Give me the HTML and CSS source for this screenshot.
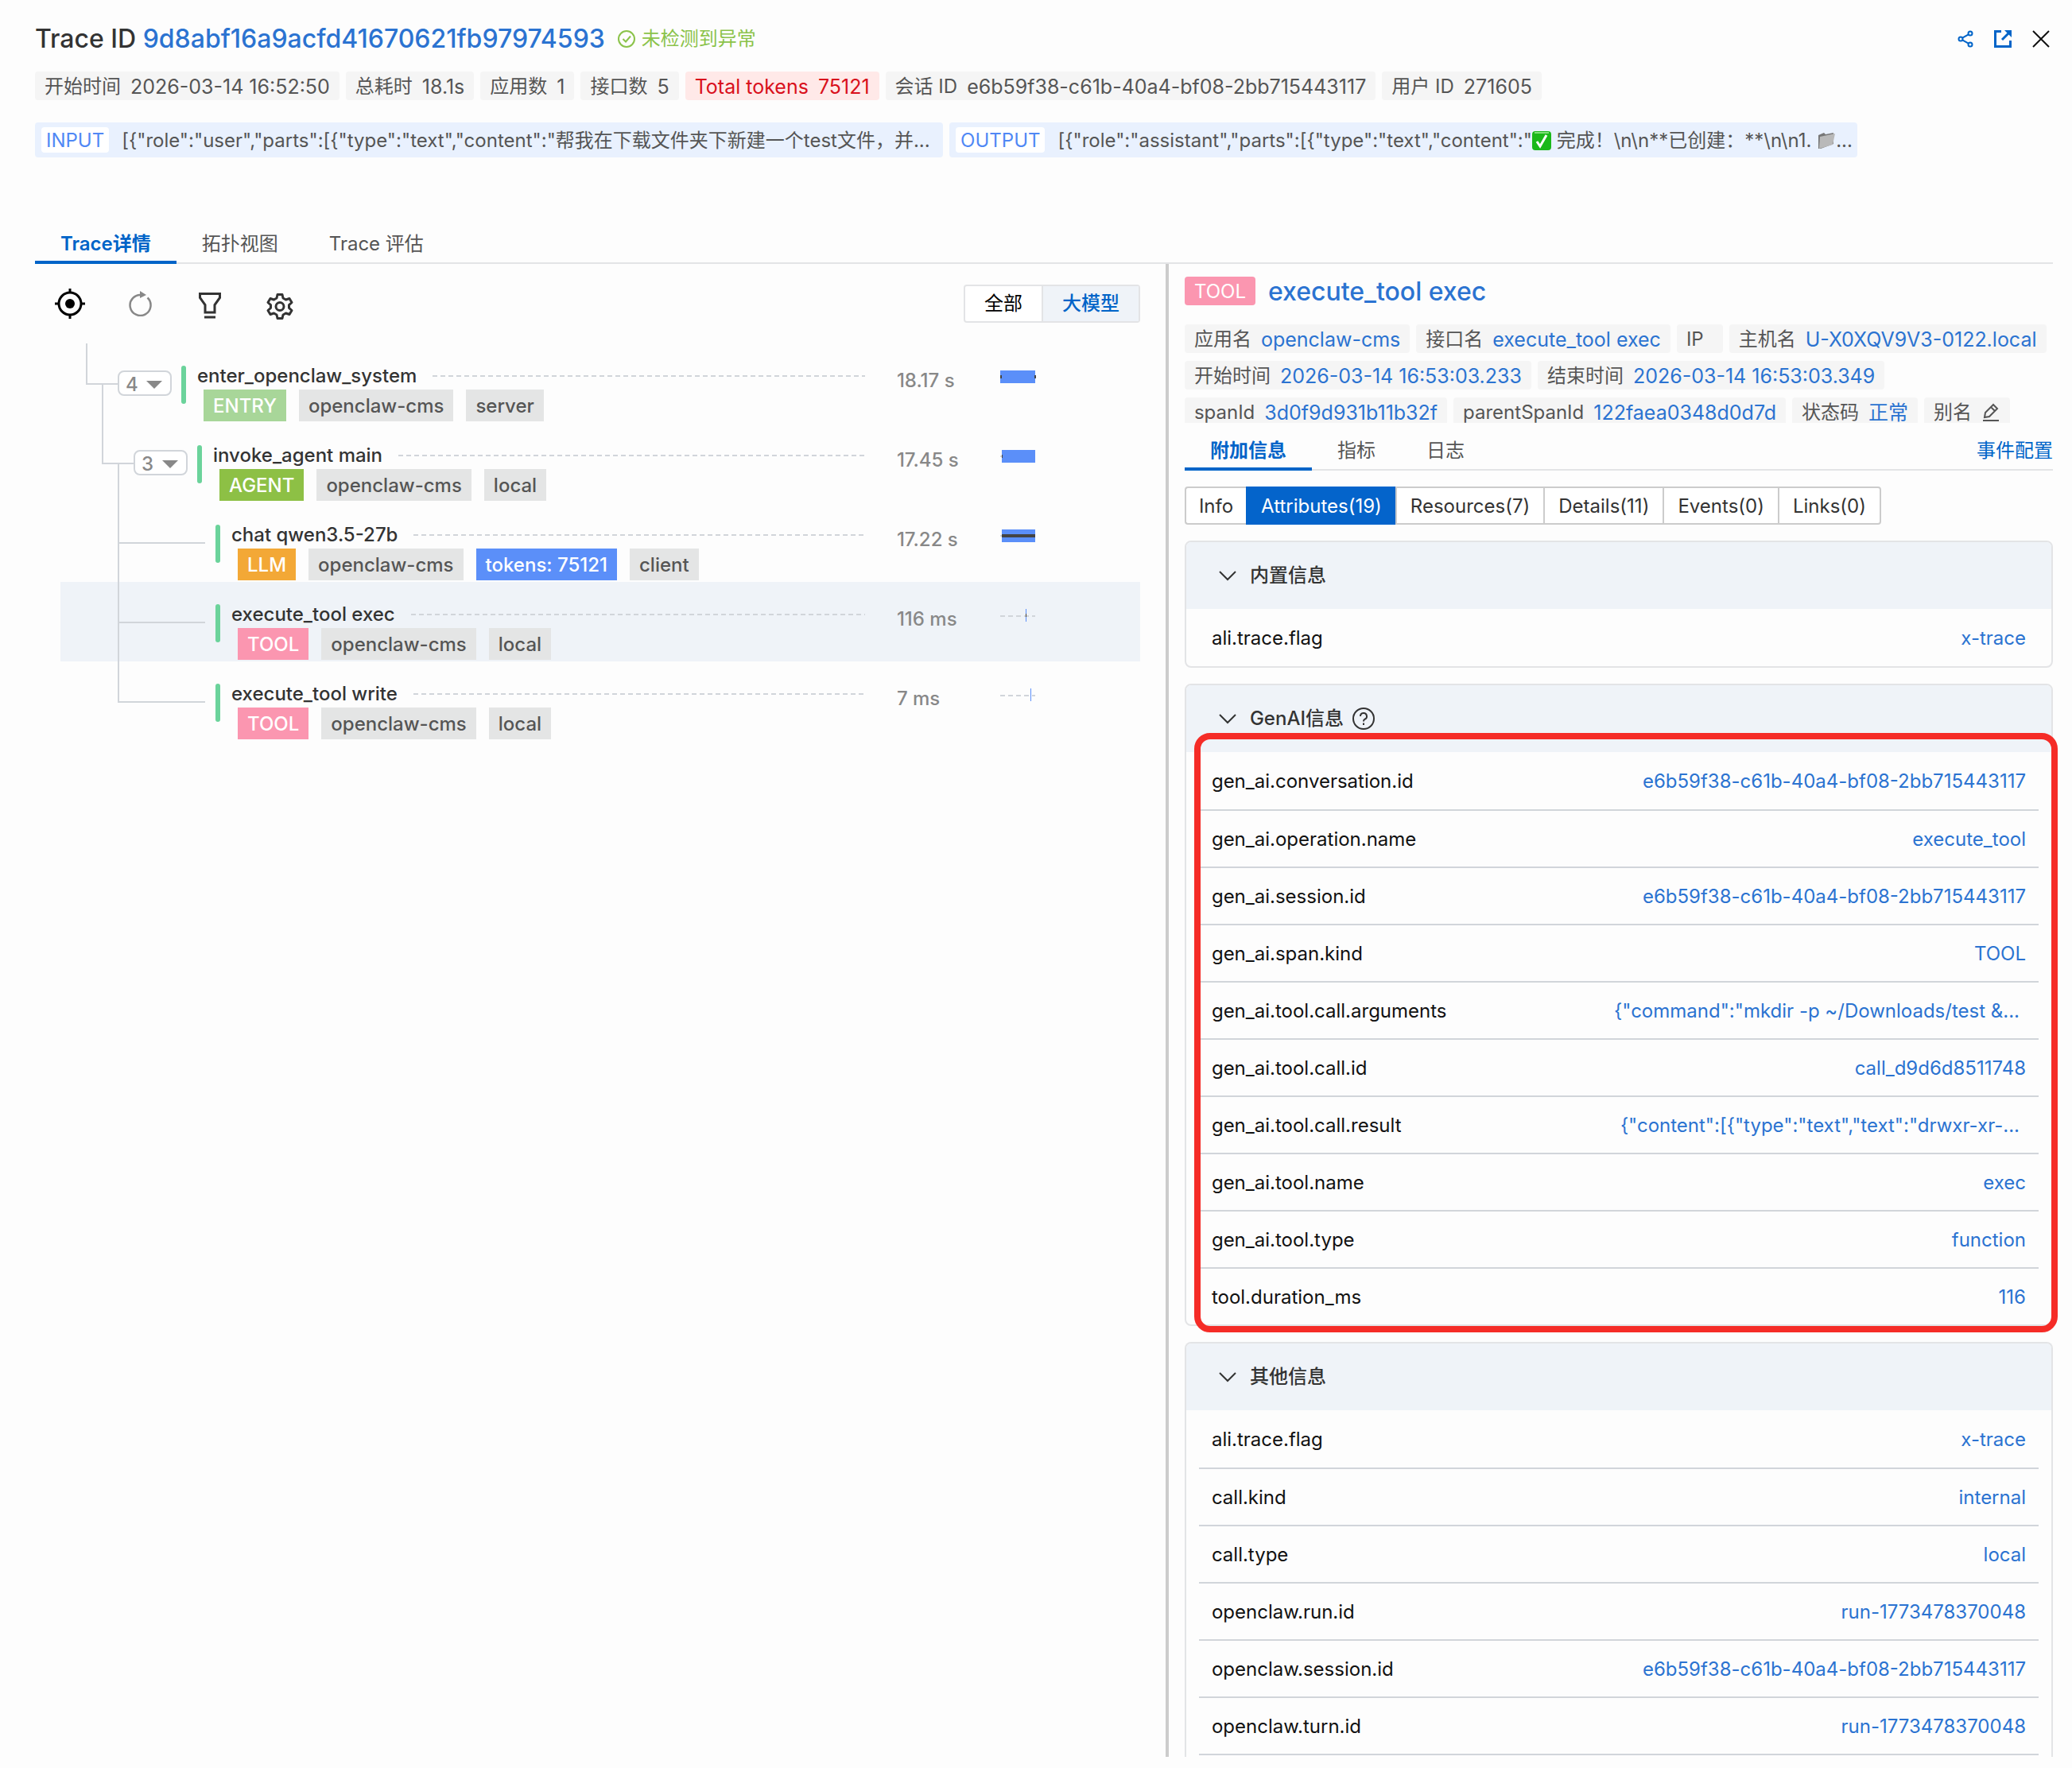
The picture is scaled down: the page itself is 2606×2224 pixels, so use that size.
FILE: index.html
```html
<!DOCTYPE html>
<html lang="zh-CN">
<head>
    <meta charset="UTF-8">
    <meta name="viewport" content="width=device-width, initial-scale=1.0">
    <title>Trace详情</title>
    <link rel="stylesheet" href="styles.css">
</head>
<body>

    <header class="trace-header">
        <div class="title-row">
            <h1>Trace ID <span class="trace-id">9d8abf16a9acfd41670621fb97974593</span></h1>
            <span class="status-ok">
                <svg width="22" height="22" viewBox="0 0 22 22" fill="none" stroke="currentColor" stroke-width="2"><circle cx="11" cy="11" r="10"/><path d="M6.5 11l3.5 3.5 6-7"/></svg>
                未检测到异常
            </span>
            <div class="window-actions">
                <button type="button" aria-label="分享">
                    <svg width="20" height="22" viewBox="0 0 20 22" fill="none" stroke="currentColor" stroke-width="2"><circle cx="4" cy="11" r="2.5"/><circle cx="16" cy="4" r="2.5"/><circle cx="16" cy="18" r="2.5"/><path d="M6.2 9.7L13.8 5.3M6.2 12.3l7.6 4.4"/></svg>
                </button>
                <button type="button" aria-label="新窗口打开">
                    <svg width="22" height="22" viewBox="0 0 22 22" fill="none" stroke="currentColor" stroke-width="3"><path d="M9 1.5H1.5v19h19V13"/><path d="M10 12l8-8"/><path d="M13 0h9v9z" fill="currentColor" stroke="none"/></svg>
                </button>
                <button type="button" class="close" aria-label="关闭">
                    <svg width="22" height="22" viewBox="0 0 22 22" fill="none" stroke="currentColor" stroke-width="2"><path d="M1 1l20 20M21 1L1 21"/></svg>
                </button>
            </div>
        </div>

        <div class="tags">
            <span class="tag"><span>开始时间</span><span class="val">2026-03-14 16:52:50</span></span>
            <span class="tag"><span>总耗时</span><span class="val">18.1s</span></span>
            <span class="tag"><span>应用数</span><span class="val">1</span></span>
            <span class="tag"><span>接口数</span><span class="val">5</span></span>
            <span class="tag tag-red"><span class="val">Total tokens</span><span class="val">75121</span></span>
            <span class="tag"><span>会话 ID</span><span class="val">e6b59f38-c61b-40a4-bf08-2bb715443117</span></span>
            <span class="tag"><span>用户 ID</span><span class="val">271605</span></span>
        </div>

        <div class="io-row">
            <div class="io">
                <span class="io-label">INPUT</span>
                <span class="io-text">[{"role":"user","parts":[{"type":"text","content":"帮我在下载文件夹下新建一个test文件，并...</span>
            </div>
            <div class="io">
                <span class="io-label">OUTPUT</span>
                <span class="io-text">[{"role":"assistant","parts":[{"type":"text","content":"<svg class="emoji" width="24" height="24" viewBox="0 0 24 24"><rect width="24" height="24" rx="4" fill="#1ab81a"/><path d="M3 2h18" stroke="#7fe07a" stroke-width="2"/><path d="M6 13l4 6 8-14" fill="none" stroke="#fff" stroke-width="3"/></svg> 完成！\n\n**已创建：**\n\n1. <svg class="emoji" width="24" height="24" viewBox="0 0 24 24"><path d="M2 5l7-3 2 2 10-2v14L5 22H2z" fill="#777"/><path d="M4 7l19-4-3 14L3 22z" fill="#b9b9b9"/></svg>...</span>
            </div>
        </div>
    </header>

    <nav class="tabs main-tabs">
        <button type="button" class="tab active">Trace详情</button>
        <button type="button" class="tab">拓扑视图</button>
        <button type="button" class="tab">Trace 评估</button>
    </nav>

    <main class="content">
        <section class="tree-panel">
            <div class="toolbar">
                <button type="button" class="tool-btn black" aria-label="定位">
                    <svg width="40" height="40" viewBox="0 0 40 40" fill="none" stroke="currentColor" stroke-width="3"><circle cx="20" cy="20" r="14"/><circle cx="20" cy="20" r="6" fill="currentColor" stroke="none"/><path d="M20 1v6M20 33v6M1 20h6M33 20h6"/></svg>
                </button>
                <button type="button" class="tool-btn grey" aria-label="刷新">
                    <svg width="32" height="32" viewBox="0 0 32 32" fill="none" stroke="currentColor" stroke-width="2.5"><path d="M25.500 8.500A13 13 0 1 1 18 5"/><path d="M16 0l8 5-8 4z" fill="currentColor" stroke="none"/></svg>
                </button>
                <button type="button" class="tool-btn" aria-label="筛选">
                    <svg width="32" height="40" viewBox="0 -4 32 40" fill="none" stroke="currentColor" stroke-width="3"><path d="M3.500 3.500h25v5l-6.500 9v9.500H10V17.500l-6.500-9z"/><path d="M9 33h14"/></svg>
                </button>
                <button type="button" class="tool-btn" aria-label="设置">
                    <svg width="34" height="40" viewBox="0 -6 34 40" fill="none" stroke="currentColor" stroke-width="3" stroke-linejoin="round"><path d="M14 2.500h6l1 4.500 3.500 2 4.500-1.500 3 5-3.500 3.200v3.600l3.500 3.200-3 5-4.500-1.500-3.500 2-1 4.500h-6l-1-4.500-3.500-2L5 27.500l-3-5 3.500-3.200v-3.600L2 12.500l3-5L9.500 9 13 7z"/><circle cx="17" cy="17.500" r="5"/></svg>
                </button>
                <div class="switch">
                    <button type="button">全部</button>
                    <button type="button" class="on">大模型</button>
                </div>
            </div>

            <div class="tree">
                <div class="node">
                    <svg class="guide" width="72" height="100"><path d="M33 0V51H72M53 51V100"/></svg>
                    <button type="button" class="fold">4<i></i></button>
                    <span class="mark"></span>
                    <div class="info">
                        <div class="name">enter_openclaw_system<span class="dash"></span></div>
                        <div class="labels"><span class="label entry">ENTRY</span><span class="label">openclaw-cms</span><span class="label">server</span></div>
                    </div>
                    <span class="cost">18.17 s</span>
                    <svg class="bar" width="176" height="16"><path d="M0 8h44" class="base"/><rect width="44" height="16" class="fill"/><path d="M0 8h2M43 8h2" class="self"/></svg>
                </div>
                <div class="node">
                    <svg class="guide" width="92" height="100"><path d="M53 0V51H92M73 51V100"/></svg>
                    <button type="button" class="fold">3<i></i></button>
                    <span class="mark"></span>
                    <div class="info">
                        <div class="name">invoke_agent main<span class="dash"></span></div>
                        <div class="labels"><span class="label agent">AGENT</span><span class="label">openclaw-cms</span><span class="label">local</span></div>
                    </div>
                    <span class="cost">17.45 s</span>
                    <svg class="bar" width="176" height="16"><path d="M0 8h44" class="base"/><rect x="2" width="42" height="16" class="fill"/><path d="M2 8h1" class="self"/></svg>
                </div>
                <div class="node">
                    <svg class="guide" width="183" height="100"><path d="M73 0V100M73 51H182"/></svg>
                    <span class="mark"></span>
                    <div class="info">
                        <div class="name">chat qwen3.5-27b<span class="dash"></span></div>
                        <div class="labels"><span class="label llm">LLM</span><span class="label">openclaw-cms</span><span class="label tokens">tokens: 75121</span><span class="label">client</span></div>
                    </div>
                    <span class="cost">17.22 s</span>
                    <svg class="bar" width="176" height="16"><path d="M0 8h44" class="base"/><rect x="2" width="42" height="16" class="fill"/><path d="M2 8h42" class="self"/></svg>
                </div>
                <div class="node selected">
                    <svg class="guide" width="183" height="100"><path d="M73 0V100M73 51H182"/></svg>
                    <span class="mark"></span>
                    <div class="info">
                        <div class="name">execute_tool exec<span class="dash"></span></div>
                        <div class="labels"><span class="label tool">TOOL</span><span class="label">openclaw-cms</span><span class="label">local</span></div>
                    </div>
                    <span class="cost">116 ms</span>
                    <svg class="bar" width="176" height="16"><path d="M0 9h44" class="base"/><rect x="32" width="1" height="16" class="fill"/><path d="M32 8h1" class="self"/></svg>
                </div>
                <div class="node">
                    <svg class="guide" width="183" height="100"><path d="M73 0V51H182"/></svg>
                    <span class="mark"></span>
                    <div class="info">
                        <div class="name">execute_tool write<span class="dash"></span></div>
                        <div class="labels"><span class="label tool">TOOL</span><span class="label">openclaw-cms</span><span class="label">local</span></div>
                    </div>
                    <span class="cost">7 ms</span>
                    <svg class="bar" width="176" height="16"><path d="M0 9h44" class="base"/><rect x="38" width="1" height="16" class="fill"/></svg>
                </div>
            </div>
        </section>

        <section class="detail-panel">
            <div class="span-title">
                <span class="badge">TOOL</span>
                <h2>execute_tool exec</h2>
            </div>

            <div class="tags span-tags">
                <span class="tag"><span>应用名</span><span class="val">openclaw-cms</span></span>
                <span class="tag"><span>接口名</span><span class="val">execute_tool exec</span></span>
                <span class="tag"><span>IP</span><span class="val"></span></span>
                <span class="tag"><span>主机名</span><span class="val">U-X0XQV9V3-0122.local</span></span>
                <span class="tag"><span>开始时间</span><span class="val">2026-03-14 16:53:03.233</span></span>
                <span class="tag"><span>结束时间</span><span class="val">2026-03-14 16:53:03.349</span></span>
                <span class="tag"><span>spanId</span><span class="val">3d0f9d931b11b32f</span></span>
                <span class="tag"><span>parentSpanId</span><span class="val">122faea0348d0d7d</span></span>
                <span class="tag"><span>状态码</span><span class="val">正常</span></span>
                <span class="tag"><span>别名</span><svg class="edit" width="24" height="24" viewBox="0 0 24 24" fill="none" stroke="currentColor" stroke-width="2"><path d="M4 19l1-6L15 3l5 5L10 18zM12 6l5 5M2 23h20"/></svg></span>
            </div>

            <nav class="tabs detail-tabs">
                <button type="button" class="tab active">附加信息</button>
                <button type="button" class="tab">指标</button>
                <button type="button" class="tab">日志</button>
                <a href="#" class="event-link">事件配置</a>
            </nav>

            <div class="segments">
                <button type="button">Info</button>
                <button type="button" class="on">Attributes(19)</button>
                <button type="button">Resources(7)</button>
                <button type="button">Details(11)</button>
                <button type="button">Events(0)</button>
                <button type="button">Links(0)</button>
            </div>

            <div class="card">
                <h3><svg width="24" height="14" viewBox="0 0 24 14"><path d="M2 2l10 10L22 2"/></svg>内置信息</h3>
                <div class="card-body">
                    <table>
                        <tr><th>ali.trace.flag</th><td>x-trace</td></tr>
                    </table>
                </div>
            </div>

            <div class="card">
                <h3><svg width="24" height="14" viewBox="0 0 24 14"><path d="M2 2l10 10L22 2"/></svg>GenAI信息<svg class="help" width="30" height="30" viewBox="0 0 30 30"><circle cx="15" cy="15" r="13"/><path d="M11 12a4 4 0 1 1 5.500 3.700Q15 16.500 15 18.500M15 20.500v2.500"/></svg></h3>
                <div class="card-body">
                    <table>
                        <tr><th>gen_ai.conversation.id</th><td>e6b59f38-c61b-40a4-bf08-2bb715443117</td></tr>
                        <tr><th>gen_ai.operation.name</th><td>execute_tool</td></tr>
                        <tr><th>gen_ai.session.id</th><td>e6b59f38-c61b-40a4-bf08-2bb715443117</td></tr>
                        <tr><th>gen_ai.span.kind</th><td>TOOL</td></tr>
                        <tr><th>gen_ai.tool.call.arguments</th><td class="cut">{"command":"mkdir -p ~/Downloads/test &amp;...</td></tr>
                        <tr><th>gen_ai.tool.call.id</th><td>call_d9d6d8511748</td></tr>
                        <tr><th>gen_ai.tool.call.result</th><td class="cut">{"content":[{"type":"text","text":"drwxr-xr-...</td></tr>
                        <tr><th>gen_ai.tool.name</th><td>exec</td></tr>
                        <tr><th>gen_ai.tool.type</th><td>function</td></tr>
                        <tr><th>tool.duration_ms</th><td>116</td></tr>
                    </table>
                </div>
                <div class="red-box"></div>
            </div>

            <div class="card more">
                <h3><svg width="24" height="14" viewBox="0 0 24 14"><path d="M2 2l10 10L22 2"/></svg>其他信息</h3>
                <div class="card-body">
                    <table>
                        <tr><th>ali.trace.flag</th><td>x-trace</td></tr>
                        <tr><th>call.kind</th><td>internal</td></tr>
                        <tr><th>call.type</th><td>local</td></tr>
                        <tr><th>openclaw.run.id</th><td>run-1773478370048</td></tr>
                        <tr><th>openclaw.session.id</th><td>e6b59f38-c61b-40a4-bf08-2bb715443117</td></tr>
                        <tr><th>openclaw.turn.id</th><td>run-1773478370048</td></tr>
                    </table>
                </div>
            </div>
        </section>
    </main>

</body>
</html>
```

FILE: styles.css
```css
* {
    box-sizing: border-box;
}

body {
    margin: 0;
    height: 100vh;
    padding: 24px 0 14px 44px;
    display: flex;
    flex-direction: column;
    background: #fdfdfd;
    color: #555;
    font-family: Inter, "Noto Sans CJK SC", sans-serif;
    font-size: 24px;
    line-height: 36px;
}

button {
    font: inherit;
    color: inherit;
    background: none;
    border: 0;
    padding: 0;
    cursor: pointer;
}

a {
    text-decoration: none;
}

svg {
    display: block;
    flex: none;
}

h1, h2, h3 {
    margin: 0;
    font-weight: 500;
}

/* Header */
.trace-header {
    padding-right: 24px;
}

.title-row {
    display: flex;
    align-items: center;
    height: 50px;
    margin-bottom: 16px;
}

h1 {
    font-size: 32px;
    color: #333;
}

.trace-id {
    color: #2b73d1;
}

.status-ok {
    display: flex;
    align-items: center;
    gap: 8px;
    margin-left: 16px;
    color: #8bc34a;
}

.window-actions {
    display: flex;
    gap: 26px;
    margin-left: auto;
    padding-right: 4px;
    color: #0064c8;
}

.window-actions .close {
    color: #111;
}

.tags {
    display: flex;
    flex-wrap: wrap;
    gap: 10px 8px;
}

.tag {
    display: flex;
    gap: 12px;
    height: 36px;
    padding: 0 12px;
    border-radius: 4px;
    background: #f5f5f5;
    line-height: 38px;
    white-space: nowrap;
}

.tag-red {
    background: #ffe9e8;
    color: #d9101c;
}

.val {
    font-size: 25px;
}

.span-tags .val {
    color: #2b73d1;
}

.io-row {
    display: flex;
    gap: 8px;
    margin-top: 28px;
}

.io {
    display: flex;
    align-items: center;
    gap: 16px;
    width: 45%;
    height: 44px;
    padding: 0 8px;
    border-radius: 4px;
    background: #e9f1fe;
}

.io-label {
    height: 32px;
    line-height: 34px;
    padding: 0 6px;
    border-radius: 4px;
    background: #fff;
    color: #5088f5;
}

.io-text {
    padding-top: 2px;
    white-space: nowrap;
}

.emoji {
    display: inline-block;
    vertical-align: -4px;
}

/* Tabs */
.tabs {
    display: flex;
    box-shadow: inset 0 -2px #e3e4e6;
}

.main-tabs {
    margin: 86px 24px 0 0;
}

.tab {
    padding: 2px 32px 0;
    line-height: 42px;
    border-bottom: 4px solid transparent;
}

.tab.active {
    color: #0064c8;
    font-weight: 600;
    border-color: #0064c8;
}

.content {
    flex: 1;
    min-height: 0;
    display: flex;
}

/* Span tree */
.tree-panel {
    width: 55.5%;
}

.toolbar {
    display: flex;
    align-items: center;
    height: 100px;
    padding-right: 32px;
}

.tool-btn {
    display: flex;
    justify-content: center;
    width: 88px;
    color: #333;
}

.tool-btn.black {
    color: #000;
}

.tool-btn.grey {
    color: #888;
}

.switch {
    display: flex;
    margin-left: auto;
    border: 2px solid #e3e4e6;
    border-radius: 4px;
    background: #fff;
    color: #000;
}

.switch button {
    height: 44px;
    padding: 0 24px;
}

.switch .on {
    background: #eff3f8;
    border-left: 2px solid #e3e4e6;
    color: #0064c8;
    font-weight: 500;
}

.tree {
    padding: 0 32px;
}

.node {
    display: flex;
    align-items: flex-start;
    height: 100px;
    font-weight: 500;
}

.node.selected {
    background: #eff3f8;
}

.guide {
    fill: none;
    stroke: #d1d5da;
    stroke-width: 2;
}

.fold {
    display: flex;
    align-items: center;
    justify-content: space-between;
    width: 68px;
    height: 32px;
    margin-top: 34px;
    padding: 4px 10px 0 8px;
    border: 2px solid #d1d5da;
    border-radius: 8px;
    background: #fff;
    color: #888;
}

.fold i {
    border: 10px solid transparent;
    border-top-color: #888;
    border-bottom: 0;
}

.mark {
    width: 6px;
    height: 48px;
    margin: 28px 14px 0 12px;
    border-radius: 3px;
    background: #6bd39b;
}

.info {
    flex: 1;
    padding-top: 24px;
}

.name {
    display: flex;
    align-items: center;
    gap: 20px;
    line-height: 34px;
    color: #333;
}

.dash {
    flex: 1;
    height: 2px;
    background: repeating-linear-gradient(90deg, #d1d5da 0 6px, transparent 6px 10px);
}

.labels {
    display: flex;
    gap: 16px;
    padding-left: 8px;
}

.label {
    height: 40px;
    line-height: 42px;
    padding: 0 12px;
    background: #e4e5e5;
}

.label.entry,
.label.agent,
.label.llm,
.label.tool,
.label.tokens {
    color: #fff;
}

.label.entry {
    background: #a8d699;
}

.label.agent {
    background: #8dc045;
}

.label.llm {
    background: #f3a836;
}

.label.tool {
    background: #fb96b0;
}

.label.tokens {
    background: #5b8ff9;
}

.cost {
    width: 130px;
    margin: 30px 0 0 40px;
    line-height: 34px;
    color: #888;
}

.bar {
    margin-top: 34px;
}

.bar .base {
    stroke: #d1d5da;
    stroke-width: 2;
    stroke-dasharray: 6 4;
}

.bar .fill {
    fill: #5b8ff9;
}

.bar .self {
    stroke: #444;
    stroke-width: 4;
}

/* Span detail */
.detail-panel {
    flex: 1;
    min-width: 0;
    display: flex;
    flex-direction: column;
    overflow: hidden;
    padding: 16px 24px 0 20px;
    border-left: 4px solid #ccc;
}

.span-title {
    display: flex;
    align-items: center;
    gap: 16px;
    height: 36px;
}

.badge {
    height: 36px;
    line-height: 38px;
    padding: 0 12px;
    border-radius: 4px;
    background: #fb96b0;
    color: #fff;
}

h2 {
    padding-top: 2px;
    font-size: 32px;
    color: #2b73d1;
}

.span-tags {
    flex: none;
    height: 124px;
    margin-top: 24px;
    overflow: hidden;
}

.edit {
    margin-top: 6px;
}

.detail-tabs {
    margin-top: 12px;
}

.event-link {
    margin-left: auto;
    padding-top: 2px;
    line-height: 42px;
    color: #0064c8;
}

.segments {
    display: flex;
    margin-top: 20px;
    color: #333;
}

.segments button {
    height: 48px;
    padding: 2px 17px 0;
    border: 2px solid #ccc;
    border-right: 0;
    background: #fff;
}

.segments button:first-child {
    padding: 2px 16px 0;
    border-radius: 4px 0 0 4px;
}

.segments button:last-child {
    border-right: 2px solid #ccc;
    border-radius: 0 4px 4px 0;
}

.segments .on {
    background: #0464cb;
    border-color: #0464cb;
    color: #fff;
}

.card {
    flex: none;
    position: relative;
    margin-top: 20px;
    border: 2px solid #e3e4e6;
    border-radius: 8px;
}

h3 {
    display: flex;
    align-items: center;
    height: 84px;
    padding-left: 40px;
    gap: 16px;
    background: #eff3f8;
    border-radius: 6px 6px 0 0;
    font-size: 24px;
    color: #333;
}

h3 svg {
    fill: none;
    stroke: #333;
    stroke-width: 2;
}

h3 .help {
    margin-left: -6px;
}

.card-body {
    padding: 2px 16px 0;
}

table {
    width: 100%;
    border-spacing: 0;
}

th,
td {
    padding: 17px 16px;
    border-bottom: 2px solid #d1d5da;
    font-weight: 400;
}

tr + tr > * {
    padding-top: 18px;
    padding-bottom: 16px;
}

th {
    color: #111;
    text-align: left;
}

td {
    color: #2b73d1;
    text-align: right;
}

td.cut {
    padding-right: 24px;
}

.card:not(.more) tr:last-child > * {
    border-bottom: 0;
}

.card.more {
    flex: 1 0 auto;
    border-bottom: 0;
    border-radius: 8px 8px 0 0;
}

/* Highlight frame round the GenAI attributes */
.red-box {
    position: absolute;
    top: 60px;
    right: -8px;
    bottom: -10px;
    left: 10px;
    border: 8px solid #f52c27;
    border-radius: 20px;
    pointer-events: none;
}
```
